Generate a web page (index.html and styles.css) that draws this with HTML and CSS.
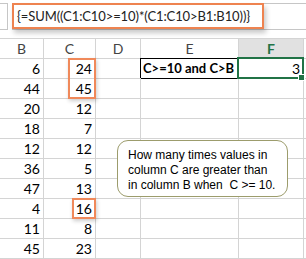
FILE: index.html
```html
<!DOCTYPE html>
<html>
<head>
<meta charset="utf-8">
<link rel="stylesheet" href="styles.css">
</head>
<body>
<div class="fbar">
  <div class="namebox"></div>
  <div class="formula"><span class="ftext">{=SUM((C1:C10&gt;=10)*(C1:C10&gt;B1:B10))}</span></div>
</div>
<div class="sheet">
  <div class="grid">
    <div class="hd">B</div><div class="hd">C</div><div class="hd">D</div><div class="hd">E</div><div class="hd hd-sel">F</div><div class="hd end"></div>

    <div class="c">6</div><div class="c">24</div><div class="c"></div><div class="c label">C&gt;=10 and C&gt;B</div><div class="c result">3</div><div class="c end"></div>
    <div class="c">44</div><div class="c">45</div><div class="c"></div><div class="c"></div><div class="c"></div><div class="c end"></div>
    <div class="c">20</div><div class="c">12</div><div class="c"></div><div class="c"></div><div class="c"></div><div class="c end"></div>
    <div class="c">18</div><div class="c">7</div><div class="c"></div><div class="c"></div><div class="c"></div><div class="c end"></div>
    <div class="c">12</div><div class="c">12</div><div class="c"></div><div class="c"></div><div class="c"></div><div class="c end"></div>
    <div class="c">36</div><div class="c">5</div><div class="c"></div><div class="c"></div><div class="c"></div><div class="c end"></div>
    <div class="c">47</div><div class="c">13</div><div class="c"></div><div class="c"></div><div class="c"></div><div class="c end"></div>
    <div class="c">4</div><div class="c">16</div><div class="c"></div><div class="c"></div><div class="c"></div><div class="c end"></div>
    <div class="c">11</div><div class="c">8</div><div class="c"></div><div class="c"></div><div class="c"></div><div class="c end"></div>
    <div class="c">45</div><div class="c">23</div><div class="c"></div><div class="c"></div><div class="c"></div><div class="c end"></div>
  </div>
  <div class="mark mark-a"></div>
  <div class="mark mark-b"></div>
  <div class="callout">How many times values in<br>column C are greater than<br>in column B when&nbsp; C &gt;= 10.</div>
</div>
</body>
</html>
```
FILE: styles.css
```css
html, body {
  margin: 0;
  padding: 0;
  background: #fff;
}
body {
  width: 306px;
  height: 259px;
  overflow: hidden;
  font-family: Lato, "Liberation Sans", sans-serif;
}
.fbar {
  height: 38px;
  box-sizing: border-box;
  padding-top: 3px;
  display: flex;
  gap: 4px;
}
.namebox {
  width: 8px;
  height: 27px;
  box-sizing: border-box;
  border: 1px solid #c6c6c6;
  border-left: none;
}
.formula {
  flex: 1;
  height: 27px;
  box-sizing: border-box;
  border-top: 1px solid #c6c6c6;
  border-bottom: 1px solid #c6c6c6;
  position: relative;
}
.ftext {
  position: absolute;
  left: 0;
  top: -1px;
  width: 252px;
  height: 26px;
  box-sizing: border-box;
  border: 2px solid #ee8350;
  padding-left: 3px;
  font-size: 13px;
  letter-spacing: -0.1px;
  line-height: 22px;
  color: #222;
  background: #fff;
  box-shadow: 2px 4px 5px rgba(0,0,0,0.22);
  white-space: nowrap;
}
.sheet {
  position: relative;
}
.grid {
  display: grid;
  grid-template-columns: 44px 52px 45px 98px 65px 2px;
  grid-template-rows: 21px repeat(10, 20px);
}
.hd, .c {
  box-sizing: border-box;
  border-right: 1px solid #d4d4d4;
  border-bottom: 1px solid #d4d4d4;
  white-space: nowrap;
}
.hd {
  border-top: 1px solid #d4d4d4;
  text-align: center;
  color: #444;
  font-size: 14px;
  line-height: 19px;
}
.hd-sel {
  background: #e1e1e1;
  color: #217346;
  font-weight: bold;
}
.end {
  border-right: none;
}
.c {
  text-align: right;
  padding: 0 3px;
  font-size: 14px;
  line-height: 19px;
  color: #000;
}
.label {
  text-align: left;
  padding-left: 2px;
  font-weight: bold;
  font-size: 13px;
  border-right-color: #000;
  border-bottom-color: #000;
  box-shadow: -1px -1px 0 #000;
}
.result {
  position: relative;
}
.result::after {
  content: "";
  position: absolute;
  left: -2px;
  top: -2px;
  right: -1px;
  bottom: -1px;
  border: 2px solid #217346;
}
.result::before {
  content: "";
  position: absolute;
  right: -2px;
  bottom: -3px;
  width: 5px;
  height: 5px;
  background: #217346;
  border: 1px solid #fff;
  z-index: 1;
}
.mark {
  position: absolute;
  box-sizing: border-box;
  border: 2px solid #f0895a;
  box-shadow: 1px 2px 4px rgba(0,0,0,0.2);
}
.mark-a {
  left: 68px;
  top: 20px;
  width: 28px;
  height: 41px;
}
.mark-b {
  left: 72px;
  top: 160px;
  width: 24px;
  height: 21px;
}
.callout {
  position: absolute;
  left: 117px;
  top: 102px;
  width: 171px;
  height: 57px;
  box-sizing: border-box;
  border: 1px solid #9c9c6c;
  border-radius: 11px;
  background: #fff;
  padding: 7px 0 0 10px;
  font-family: "Liberation Sans", Arial, sans-serif;
  font-size: 12px;
  line-height: 15px;
  color: #000;
}
```
